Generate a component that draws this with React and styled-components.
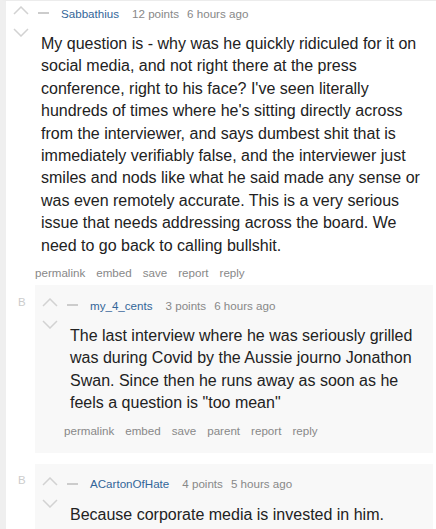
import React from "react";
import styled, { createGlobalStyle } from "styled-components";

const GlobalStyle = createGlobalStyle`
    body {
        margin: 0;
        background: #fff;
        font-family: "Liberation Sans", Arial, sans-serif;
    }
`;

const Page = styled.div`
    border-left: 6px solid #efefef;
    border-top: 1px solid #ececec;
    height: 528px;
    overflow: hidden;
`;

const Box = styled.div`
    background: ${(p) => (p.nested ? "#f8f8f8" : "#fff")};
    padding: ${(p) => (p.nested ? "12px 3px 14px 7px" : "4px 3px 0 7px")};
`;

const Entry = styled.div`
    display: flex;
`;

const VoteCol = styled.div`
    width: 22px;
    flex-shrink: 0;
    display: flex;
    flex-direction: column;
    gap: 13px;
    padding-top: 1px;
`;

const Main = styled.div`
    flex: 1;
    min-width: 0;
`;

const Tagline = styled.div`
    display: flex;
    align-items: center;
    height: 16px;
    font-size: 11.6px;
    color: #888;
    padding-left: 3px;
`;

const Collapse = styled.span`
    width: 11px;
    height: 2px;
    background: #ccc;
    margin-right: 12px;
`;

const Author = styled.a`
    color: #369;
    text-decoration: none;
    margin-right: 13px;
`;

const Meta = styled.span`
    margin-right: 8px;
`;

const Body = styled.div`
    margin: 12px 0 0 6px;
    padding-right: 4px;
    font-size: 16px;
    line-height: 22.4px;
    color: #222;
`;

const Actions = styled.ul`
    list-style: none;
    margin: 8px 0 0;
    padding: 0;
    display: flex;
    gap: 11px;
    font-size: 11.6px;
    line-height: 16px;
    color: #888;
`;

const Children = styled.div`
    margin-top: 4px;
    display: flex;
    flex-direction: column;
    gap: 11px;
`;

const ChildRow = styled.div`
    display: grid;
    grid-template-columns: 22px 1fr;
    margin-left: -22px;
`;

const Marker = styled.span`
    font-size: 11.5px;
    color: #ccc;
    padding: 10.5px 0 0 5px;
`;

const Arrow = ({ down }) => (
    <svg width="16" height="9" viewBox="0 0 16 9">
        <polyline
            points={down ? "1,1 8,8 15,1" : "1,8 8,1 15,8"}
            fill="none"
            stroke="#d2d2d2"
            strokeWidth="1.5"
        />
    </svg>
);

const Comment = ({ comment, nested }) => (
    <Box nested={nested}>
        <Entry>
            <VoteCol>
                <Arrow />
                <Arrow down />
            </VoteCol>
            <Main>
                <Tagline>
                    <Collapse />
                    <Author href="#">{comment.author}</Author>
                    <Meta>{comment.points} points</Meta>
                    <Meta>{comment.time}</Meta>
                </Tagline>
                <Body>{comment.text}</Body>
                <Actions>
                    {comment.actions.map((a) => (
                        <li key={a}>{a}</li>
                    ))}
                </Actions>
                {comment.replies && (
                    <Children>
                        {comment.replies.map((r) => (
                            <ChildRow key={r.author}>
                                <Marker>B</Marker>
                                <Comment comment={r} nested />
                            </ChildRow>
                        ))}
                    </Children>
                )}
            </Main>
        </Entry>
    </Box>
);

const thread = {
    author: "Sabbathius",
    points: 12,
    time: "6 hours ago",
    text: "My question is - why was he quickly ridiculed for it on social media, and not right there at the press conference, right to his face? I've seen literally hundreds of times where he's sitting directly across from the interviewer, and says dumbest shit that is immediately verifiably false, and the interviewer just smiles and nods like what he said made any sense or was even remotely accurate. This is a very serious issue that needs addressing across the board. We need to go back to calling bullshit.",
    actions: ["permalink", "embed", "save", "report", "reply"],
    replies: [
        {
            author: "my_4_cents",
            points: 3,
            time: "6 hours ago",
            text: "The last interview where he was seriously grilled was during Covid by the Aussie journo Jonathon Swan. Since then he runs away as soon as he feels a question is \"too mean\"",
            actions: ["permalink", "embed", "save", "parent", "report", "reply"],
        },
        {
            author: "ACartonOfHate",
            points: 4,
            time: "5 hours ago",
            text: "Because corporate media is invested in him.",
            actions: ["permalink", "embed", "save", "parent", "report", "reply"],
        },
    ],
};

export default function App() {
    return (
        <Page>
            <GlobalStyle />
            <Comment comment={thread} />
        </Page>
    );
}
